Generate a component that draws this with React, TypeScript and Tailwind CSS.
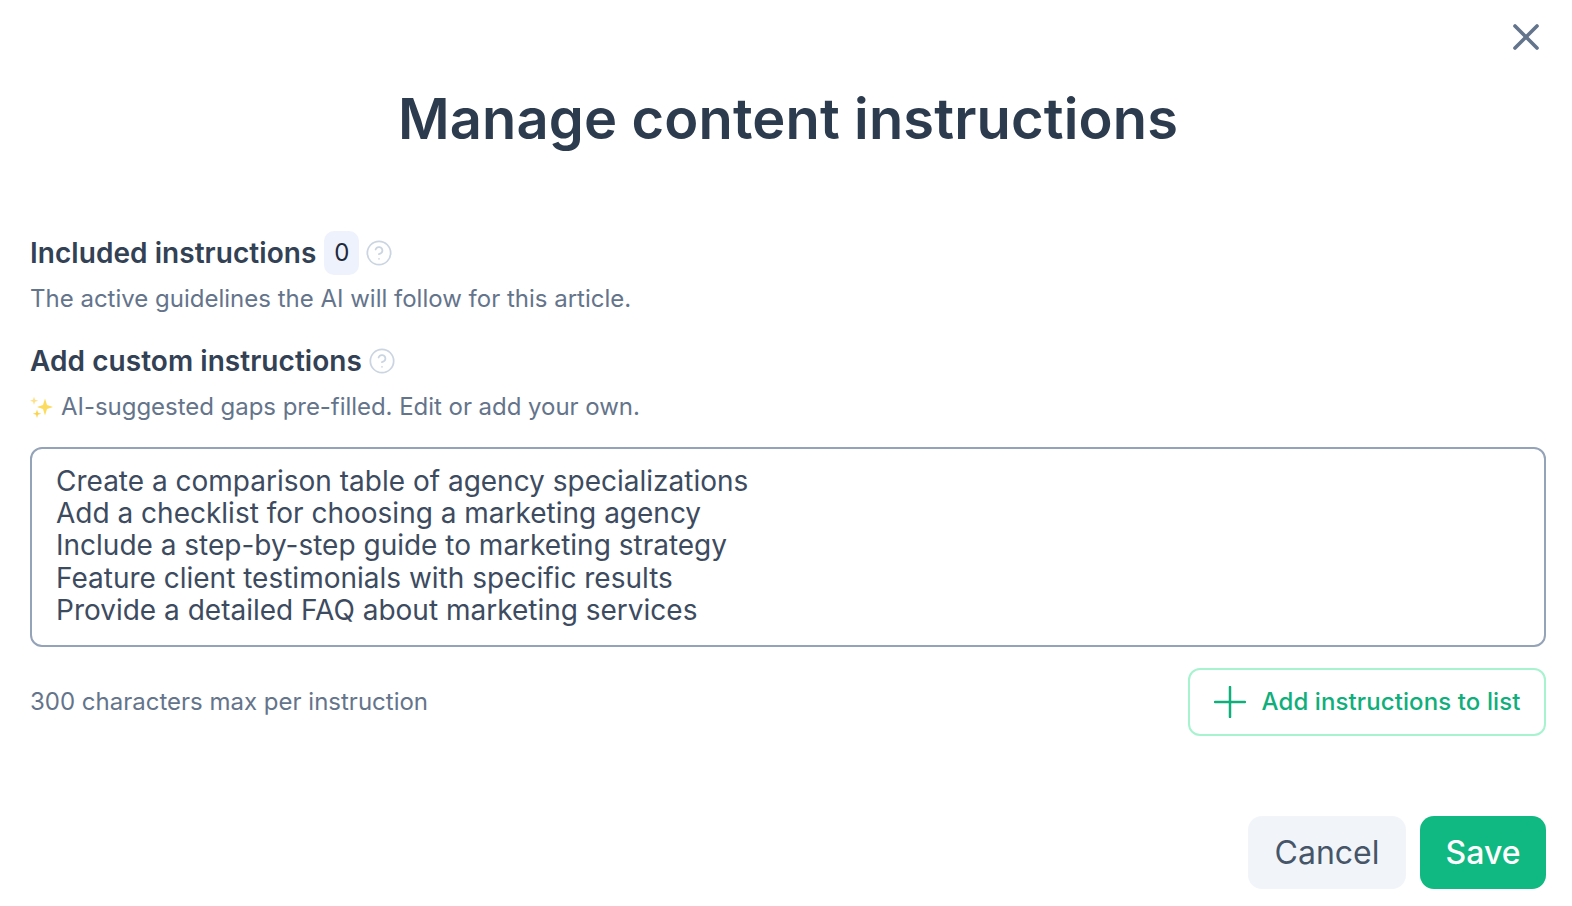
import { HelpCircle, X } from "lucide-react";

const instructions = `Create a comparison table of agency specializations
Add a checklist for choosing a marketing agency
Include a step-by-step guide to marketing strategy
Feature client testimonials with specific results
Provide a detailed FAQ about marketing services`;

const App = () => {
    return (
        <div className="relative h-[906px] w-[1572px] overflow-hidden bg-white pl-[30px] pr-[26px] font-['Inter',sans-serif]">
            {/* Close */}
            <button className="absolute right-[24px] top-[15px] text-[#64748b]" aria-label="Close">
                <X className="h-11 w-11" strokeWidth={2} />
            </button>

            {/* Title */}
            <h1 className="pt-[84px] text-center text-[56px] font-semibold leading-[70px] tracking-[0.15px] text-[#2d3b4e]">
                Manage content instructions
            </h1>

            {/* Included */}
            <div className="mt-[77px] flex h-[44px] items-center">
                <h2 className="text-[28px] font-semibold leading-[44px] tracking-[0.05px] text-[#334155]">Included instructions</h2>
                <span className="ml-2 flex h-[44px] w-[35px] items-center justify-center rounded-[10px] bg-[#eef2fc] text-2xl text-[#1e293b]">
                    0
                </span>
                <HelpCircle className="ml-[6px] h-7 w-7 text-[#cbd5e1]" strokeWidth={1.5} />
            </div>
            <p className="mt-[8px] text-2xl leading-[32px] text-[#64748b]">
                The active guidelines the AI will follow for this article.
            </p>

            {/* Custom */}
            <div className="mt-[24px] flex h-[44px] items-center">
                <h2 className="text-[28px] font-semibold leading-[44px] tracking-[0.05px] text-[#334155]">Add custom instructions</h2>
                <HelpCircle className="ml-[6px] h-7 w-7 text-[#cbd5e1]" strokeWidth={1.5} />
            </div>
            <p className="mt-[8px] flex items-center text-2xl leading-[32px] tracking-[-0.04px] text-[#64748b]">
                <svg className="mr-[8px] h-6 w-[23px]" viewBox="0 0 23 24">
                    <path d="M15 3.5l2 6.5 6 2-6 2-2 6.5-2-6.5-6-2 6-2z" fill="#fcdc5c" />
                    <path d="M4 1.5l1 3.2 3.2 1-3.2 1-1 3.2-1-3.2-3.2-1 3.2-1z" fill="#fde08a" />
                    <path d="M7 14.5l1 3.2 3.2 1-3.2 1-1 3.2-1-3.2-3.2-1 3.2-1z" fill="#fcd34d" />
                </svg>
                AI-suggested gaps pre-filled. Edit or add your own.
            </p>

            <textarea
                className="mt-[24px] block h-[200px] w-full resize-none rounded-xl border-2 border-[#94a3b8] bg-white px-6 py-[16px] text-[28px] leading-[32.2px] text-[#3d4b60] outline-none"
                defaultValue={instructions}
            />

            <div className="mt-[21px] flex items-center justify-between">
                <span className="text-2xl text-[#64748b]">300 characters max per instruction</span>
                <button className="flex h-[68px] w-[358px] items-center justify-center gap-4 rounded-xl border-2 border-[#a7f3d0] text-2xl font-medium tracking-[0.1px] text-[#10ae7b]">
                    <svg className="h-8 w-8" viewBox="0 0 32 32" fill="none" stroke="currentColor" strokeWidth={2.5} strokeLinecap="round">
                        <path d="M16 1v30M1 16h30" />
                    </svg>
                    Add instructions to list
                </button>
            </div>

            {/* Footer */}
            <div className="mt-[80px] flex justify-end gap-[14px]">
                <button className="h-[73px] w-[158px] rounded-[14px] bg-[#f1f5f9] text-[32px] text-[#475569]">Cancel</button>
                <button className="h-[73px] w-[126px] rounded-[14px] bg-[#10b981] text-[32px] font-medium text-white">Save</button>
            </div>
        </div>
    );
};

export default App;
